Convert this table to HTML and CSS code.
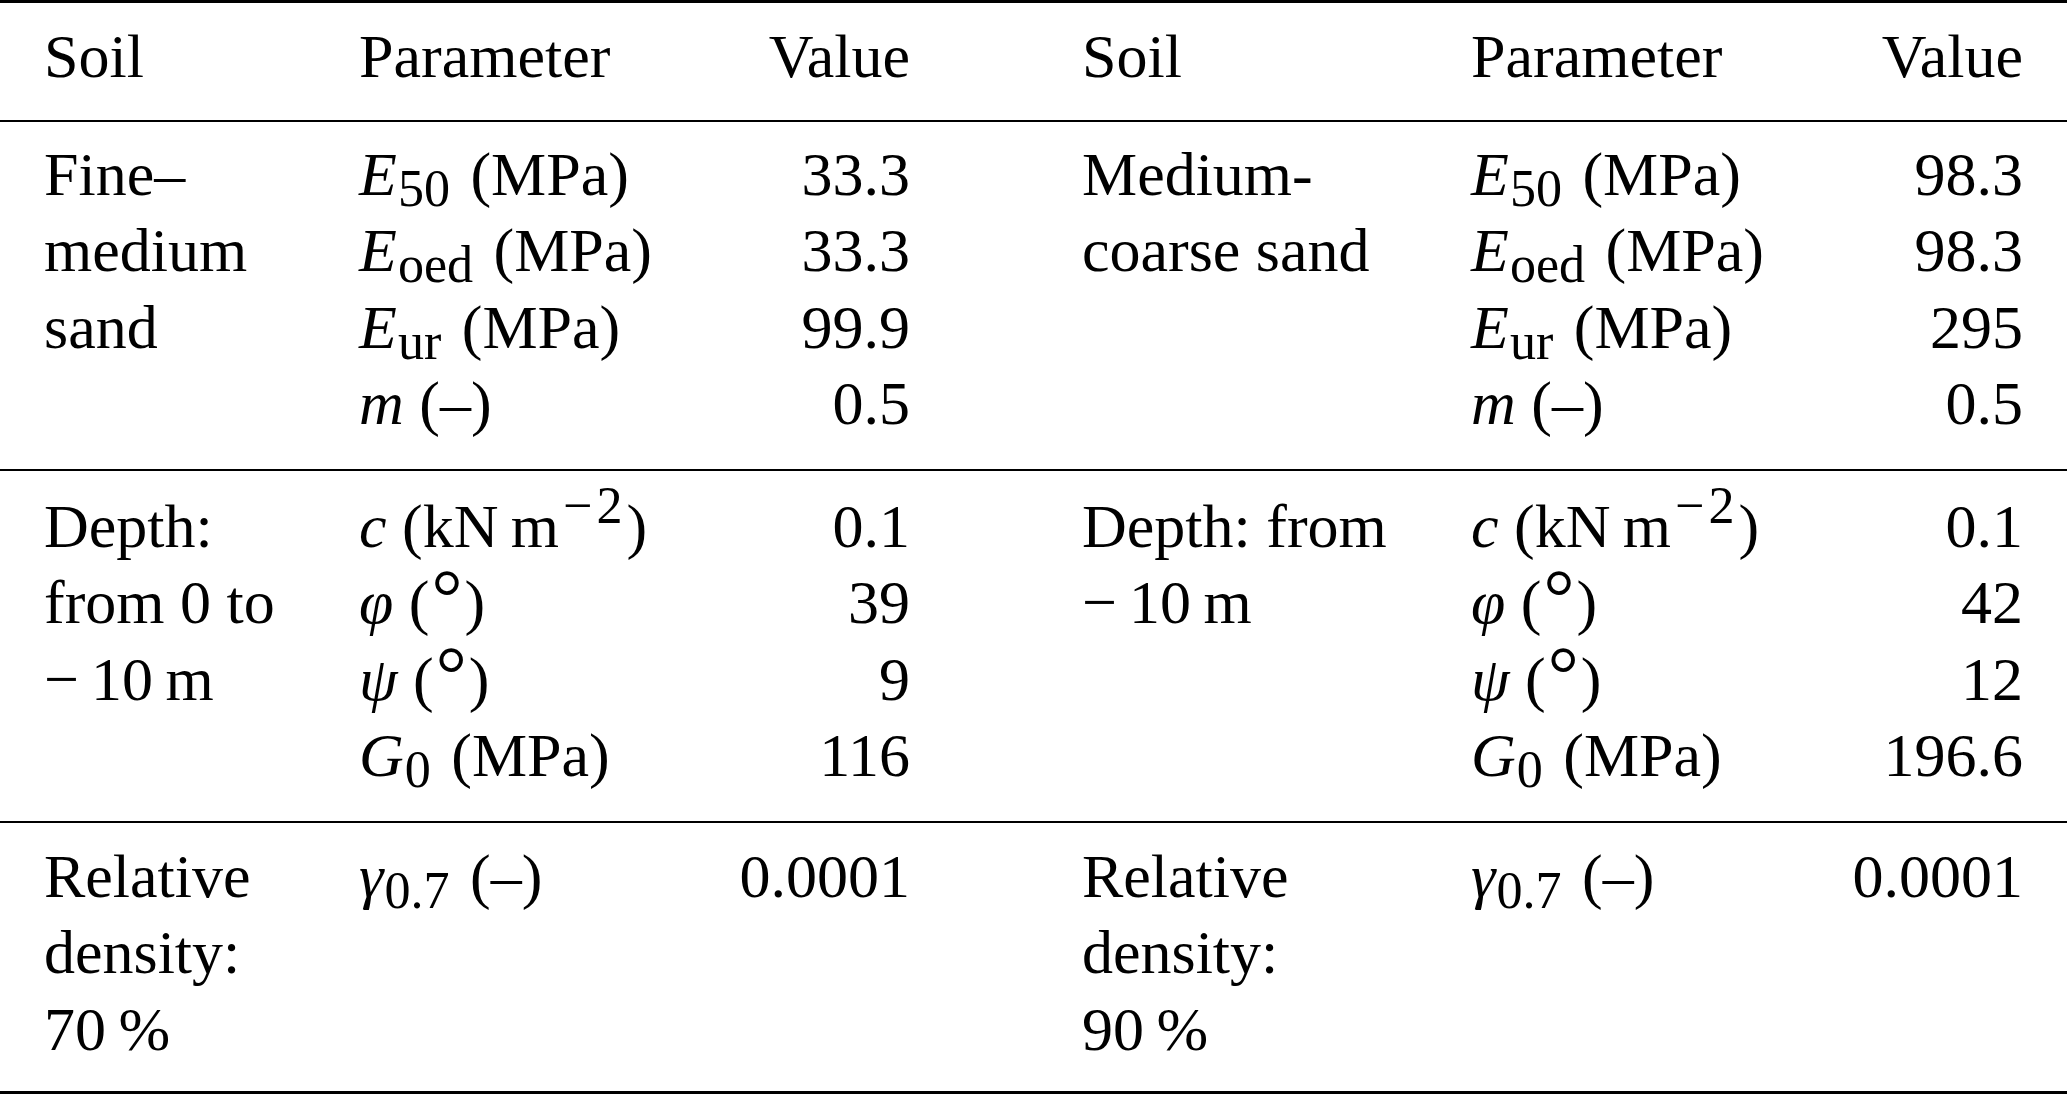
FILE: index.html
```html
<!DOCTYPE html>
<html lang="en">
<head>
<meta charset="utf-8">
<title>Soil parameters</title>
<link rel="stylesheet" href="styles.css">
</head>
<body>
<table class="params">
  <colgroup>
    <col class="c1"><col class="c2"><col class="c3"><col class="c4"><col class="c5"><col class="c6">
  </colgroup>
  <thead>
    <tr>
      <th class="soil">Soil</th>
      <th class="par">Parameter</th>
      <th class="val">Value</th>
      <th class="soil2">Soil</th>
      <th class="par">Parameter</th>
      <th class="val">Value</th>
    </tr>
  </thead>
  <tbody>
    <tr class="first">
      <td class="soil">Fine–<br>medium<br>sand</td>
      <td class="par"><i>E</i><span class="sub">50</span> (MPa)<br><i>E</i><span class="sub">oed</span> (MPa)<br><i>E</i><span class="sub">ur</span> (MPa)<br><i>m</i> (–)</td>
      <td class="val">33.3<br>33.3<br>99.9<br>0.5</td>
      <td class="soil2">Medium-<br>coarse sand</td>
      <td class="par"><i>E</i><span class="sub">50</span> (MPa)<br><i>E</i><span class="sub">oed</span> (MPa)<br><i>E</i><span class="sub">ur</span> (MPa)<br><i>m</i> (–)</td>
      <td class="val">98.3<br>98.3<br>295<br>0.5</td>
    </tr>
    <tr class="second">
      <td class="soil">Depth:<br>from 0 to<br><span class="neg">−</span>10&#8201;m</td>
      <td class="par"><i>c</i> (kN&#8201;m<span class="sup">−2</span>)<br><i>φ</i> (<span class="deg">°</span>)<br><i>ψ</i> (<span class="deg">°</span>)<br><i>G</i><span class="sub">0</span> (MPa)</td>
      <td class="val">0.1<br>39<br>9<br>116</td>
      <td class="soil2">Depth: from<br><span class="neg">−</span>10&#8201;m</td>
      <td class="par"><i>c</i> (kN&#8201;m<span class="sup">−2</span>)<br><i>φ</i> (<span class="deg">°</span>)<br><i>ψ</i> (<span class="deg">°</span>)<br><i>G</i><span class="sub">0</span> (MPa)</td>
      <td class="val">0.1<br>42<br>12<br>196.6</td>
    </tr>
    <tr class="third">
      <td class="soil">Relative<br>density:<br>70&#8201;%</td>
      <td class="par"><i>γ</i><span class="sub">0.7</span> (–)</td>
      <td class="val">0.0001</td>
      <td class="soil2">Relative<br>density:<br>90&#8201;%</td>
      <td class="par"><i>γ</i><span class="sub">0.7</span> (–)</td>
      <td class="val">0.0001</td>
    </tr>
  </tbody>
</table>
</body>
</html>
```

FILE: styles.css
```css
html, body {
  margin: 0;
  padding: 0;
  background: #ffffff;
}

.params {
  width: 2067px;
  table-layout: fixed;
  border-collapse: collapse;
  border-spacing: 0;
  font-family: "Liberation Serif", "Times New Roman", serif;
  font-size: 62px;
  line-height: 76.5px;
  color: #000000;
  border-top: 3px solid #000000;
  border-bottom: 3px solid #000000;
}

.c1 { width: 315px; }
.c2 { width: 385px; }
.c3 { width: 254px; }
.c4 { width: 473px; }
.c5 { width: 373px; }
.c6 { width: 267px; }

.params th,
.params td {
  font-weight: normal;
  vertical-align: top;
  white-space: nowrap;
  padding: 16px 0 26px 0;
}

.params thead th {
  padding-top: 15px;
  padding-bottom: 25px;
  border-bottom: 2px solid #000000;
}

.params tbody tr.first td { padding-top: 14px; padding-bottom: 27px; }
.params tbody tr.second td { padding-top: 17px; padding-bottom: 27px; }
.params tbody tr.third td { padding-top: 15px; padding-bottom: 24px; }

.params tbody tr + tr td {
  border-top: 2px solid #000000;
}

.soil { text-align: left; padding-left: 44px !important; }
.par { text-align: left; padding-left: 44px !important; }
.soil2 { text-align: left; padding-left: 128px !important; }
.val { text-align: right; padding-right: 44px !important; }

.params i {
  font-style: italic;
}

.sub {
  font-size: 0.84em;
  line-height: 0;
  vertical-align: -0.22em;
  margin-left: 1px;
  margin-right: 5px;
}

.sup {
  font-size: 0.84em;
  line-height: 0;
  vertical-align: 0.46em;
  letter-spacing: 4px;
  margin-left: 4px;
}

.deg {
  font-size: 1.25em;
  line-height: 0;
  vertical-align: 0;
  margin: 0 2px;
}

.neg {
  margin-right: 12px;
}
```
